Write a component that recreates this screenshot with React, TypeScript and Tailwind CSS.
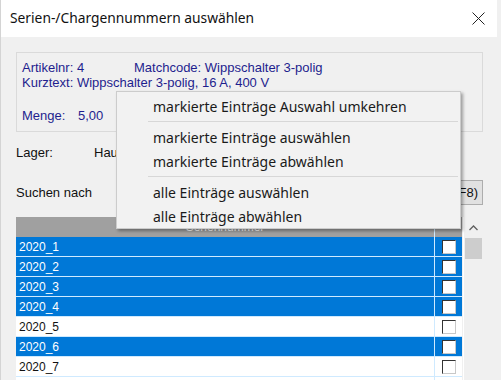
import React from "react";

const rows = [
  { id: "2020_1", sel: true },
  { id: "2020_2", sel: true },
  { id: "2020_3", sel: true },
  { id: "2020_4", sel: true },
  { id: "2020_5", sel: false },
  { id: "2020_6", sel: true },
  { id: "2020_7", sel: false },
  { id: "", sel: false },
];

function CheckBox() {
  return (
    <div className="w-[14px] h-[14px] bg-white border-t border-l border-t-[#333] border-l-[#333] border-r border-b border-r-[#c8c8c8] border-b-[#c8c8c8]" />
  );
}

export default function App() {
  const ui = { fontFamily: '"Noto Sans", "Open Sans", sans-serif' };
  const ms = { fontFamily: '"Liberation Sans", Arial, sans-serif' };
  return (
    <div className="relative w-[501px] h-[380px] overflow-hidden bg-[#f0f0f0]">
      <div className="w-[497px] h-full border-l border-[#d4d4d4] flex flex-col">
        {/* title bar */}
        <div className="h-[37px] bg-white flex items-center justify-between pl-[9px] pr-[12px] shrink-0">
          <span className="text-[13.8px] text-[#111]" style={ui}>
            Serien-/Chargennummern auswählen
          </span>
          <svg width="13" height="13" viewBox="0 0 13 13">
            <path d="M0.5 0.5 L12.5 12.5 M12.5 0.5 L0.5 12.5" stroke="#222" strokeWidth="1" />
          </svg>
        </div>
        {/* body */}
        <div className="pl-[15px] pr-[14px] pt-[15px]" style={ms}>
          <div className="h-[80px] border border-[#dadada] pl-[5px] pt-[7px] text-[13px] leading-[15px] text-[#1e1e8e]">
            <div className="flex">
              <span className="w-[112px]">Artikelnr: 4</span>
              <span>Matchcode: Wippschalter 3-polig</span>
            </div>
            <div>Kurztext: Wippschalter 3-polig, 16 A, 400 V</div>
            <div className="mt-[18px] flex">
              <span className="w-[56px]">Menge:</span>
              <span>5,00</span>
            </div>
          </div>
          <div className="mt-[13px] flex text-[13px] leading-[15px] text-[#111]">
            <span className="w-[78px]">Lager:</span>
            <span>Hauptlager</span>
          </div>
          <div className="mt-[20px] flex items-center justify-between h-[25px] text-[13px] text-[#111]">
            <span>Suchen nach</span>
            <div className="h-[25px] px-[4px] flex items-center border border-[#adadad] bg-[#e1e1e1] text-[13px]">
              Suchen (F8)
            </div>
          </div>
          {/* table */}
          <div className="mt-[12px] flex">
            <div className="w-[446px] flex flex-col">
              <div className="h-[20px] bg-[#a0a0a0] flex">
                <div className="w-[418px] flex items-center justify-center text-white text-[12px]">
                  Seriennummer
                </div>
                <div className="flex-1 border-l border-[#d0ebff]" />
              </div>
              {rows.map((r, i) => (
                <div
                  key={i}
                  className={
                    r.sel
                      ? "h-[20px] flex bg-[#0078d7] text-white border-b border-[#cfeaff]"
                      : "h-[20px] flex bg-white text-[#111] border-b border-[#cfeaff]"
                  }
                >
                  <div className="w-[418px] pl-[3px] flex items-center text-[12px]">{r.id}</div>
                  <div className="flex-1 border-l border-[#cfeaff] flex items-center justify-center pl-[1px]">
                    <CheckBox />
                  </div>
                </div>
              ))}
            </div>
            <div className="w-[20px] ml-[1px] bg-[#f0f0f0] border-l border-[#ffffff] flex flex-col items-center">
              <div className="h-[21px] flex items-center justify-center">
                <svg width="9" height="6" viewBox="0 0 9 6">
                  <path d="M0.5 5 L4.5 1 L8.5 5" stroke="#606060" strokeWidth="1.3" fill="none" />
                </svg>
              </div>
              <div className="w-[17px] h-[21px] bg-[#cdcdcd]" />
            </div>
          </div>
        </div>
      </div>

      {/* context menu */}
      <div
        className="absolute left-[116px] top-[91px] w-[345px] bg-[#f2f2f2] border border-[#cccccc] pt-[2px] shadow-[2px_2px_3px_rgba(0,0,0,0.35)] text-[14px] text-[#1a1a1a]"
        style={ui}
      >
        <div className="h-[24px] flex items-center pl-[36px]">markierte Einträge Auswahl umkehren</div>
        <div className="h-[7px] flex items-center pl-[31px] pr-[2px]">
          <div className="h-px w-full bg-[#d7d7d7]" />
        </div>
        <div className="h-[24px] flex items-center pl-[36px]">markierte Einträge auswählen</div>
        <div className="h-[24px] flex items-center pl-[36px]">markierte Einträge abwählen</div>
        <div className="h-[7px] flex items-center pl-[31px] pr-[2px]">
          <div className="h-px w-full bg-[#d7d7d7]" />
        </div>
        <div className="h-[24px] flex items-center pl-[36px]">alle Einträge auswählen</div>
        <div className="h-[24px] flex items-center pl-[36px]">alle Einträge abwählen</div>
      </div>
    </div>
  );
}
